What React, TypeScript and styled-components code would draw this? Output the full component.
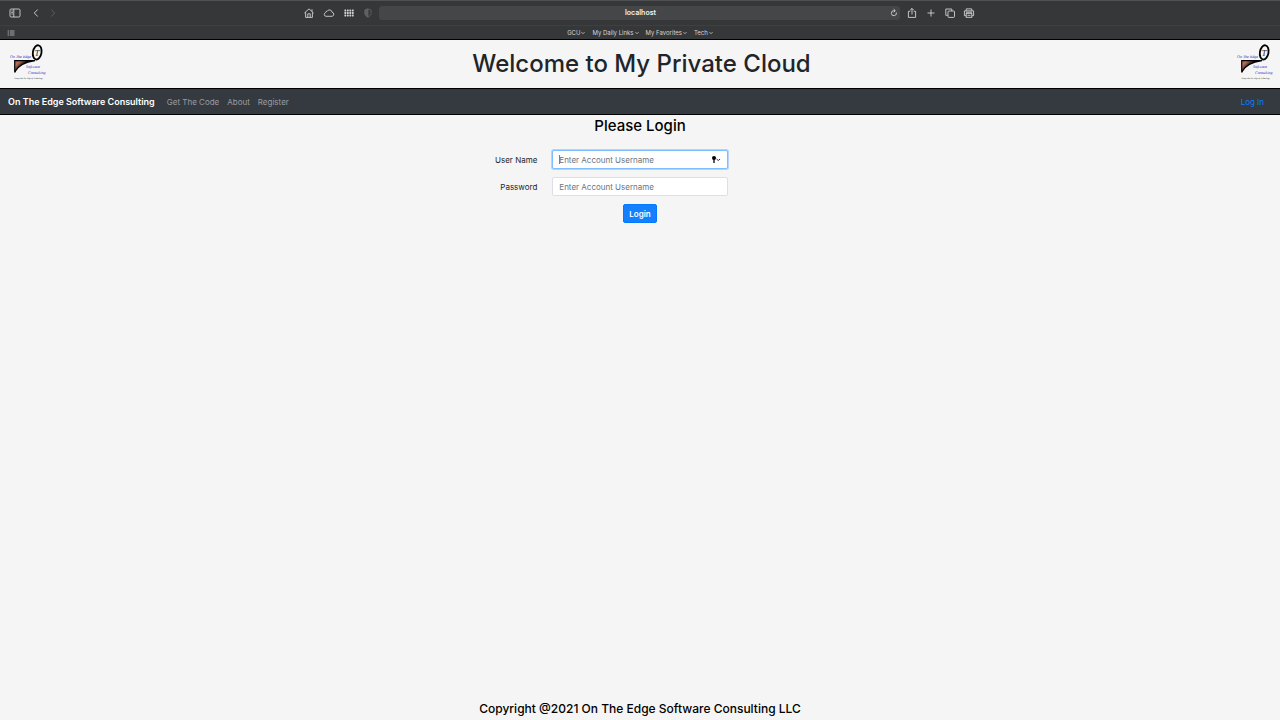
import React from "react";
import styled, { createGlobalStyle } from "styled-components";

const GlobalStyle = createGlobalStyle`
  * { box-sizing: border-box; }
  html, body, #root { height: 100%; }
  body {
    margin: 0;
    background: #f5f5f5;
    color: #212529;
    font-family: Inter, "Liberation Sans", sans-serif;
    font-size: 8px;
    line-height: 12px;
  }
`;

const Page = styled.div`
  display: flex;
  flex-direction: column;
  min-height: 100%;
`;

const Browser = styled.div`
  background: #363739;
  border-top: 1px solid #505153;
  border-bottom: 1px solid #000;
  color: #dcdcdc;
`;

const Toolbar = styled.div`
  display: grid;
  grid-template-columns: 1fr minmax(0, 672px) 1fr;
  align-items: center;
  height: 25px;
  padding-right: 2px;
  border-bottom: 1px solid #3e3f41;
`;

const ToolGroup = styled.div`
  display: flex;
  align-items: center;
  gap: 9px;
  padding-left: 9px;
`;

const ToolCenter = styled.div`
  display: flex;
  align-items: center;
  gap: 6px;
`;

const ToolSet = styled.div<{ $gap: number }>`
  display: flex;
  gap: ${(p) => p.$gap}px;
`;

const IconButton = styled.button<{ $dim?: boolean; $narrow?: boolean }>`
  display: flex;
  align-items: center;
  justify-content: center;
  width: ${(p) => (p.$narrow ? 10 : 12)}px;
  height: 12px;
  padding: 0;
  border: 0;
  background: none;
  color: ${(p) => (p.$dim ? "#606163" : "#d2d2d3")};

  svg {
    flex: none;
  }
`;

const Address = styled.div`
  display: flex;
  align-items: center;
  flex: 1;
  height: 14px;
  padding: 0 0 0 14px;
  border-radius: 3px;
  background: #454648;
`;

const AddressInput = styled.input`
  flex: 1;
  min-width: 0;
  padding: 0;
  border: 0;
  outline: 0;
  background: none;
  color: #f2f2f2;
  font: 600 7px/12px Inter, "Liberation Sans", sans-serif;
  text-align: center;
`;

const BookmarkBar = styled.div`
  display: grid;
  grid-template-columns: 1fr auto 1fr;
  align-items: center;
  height: 13px;
  padding: 0 5px;
`;

const Bookmarks = styled.div`
  display: flex;
  gap: 7px;
`;

const Bookmark = styled.button`
  display: flex;
  align-items: center;
  gap: 1px;
  padding: 0;
  border: 0;
  background: none;
  color: #d4d4d4;
  font: 400 6px/10px Inter, "Liberation Sans", sans-serif;
`;

const Header = styled.header`
  display: flex;
  align-items: center;
  justify-content: space-between;
  height: 48px;
  padding: 0 5px 0 8px;
`;

const Title = styled.h1`
  margin: 0;
  font-size: 24px;
  font-weight: 500;
  line-height: 32px;
`;

const Nav = styled.nav`
  display: flex;
  align-items: center;
  height: 27px;
  padding: 0 16px 0 8px;
  border: solid #000;
  border-width: 1px 0;
  background: #343a40;
`;

const Brand = styled.a`
  margin-right: 12px;
  color: #fff;
  font-size: 9px;
  font-weight: 600;
  line-height: 16px;
  text-decoration: none;
`;

const NavLinks = styled.div`
  display: flex;
  flex: 1;
  gap: 8px;
`;

const NavLink = styled.a<{ $primary?: boolean }>`
  color: ${(p) => (p.$primary ? "#0f7cff" : "#9a9da0")};
  text-decoration: none;
`;

const Main = styled.main`
  flex: 1;
  padding: 0 16px;
`;

const Heading = styled.h2`
  margin: 0 0 13px;
  color: #000;
  font-size: 15px;
  font-weight: 500;
  line-height: 22px;
  text-align: center;
`;

const Form = styled.form`
  display: flex;
  flex-direction: column;
  gap: 8px;
  max-width: 556px;
  margin: 0 auto;
`;

const Row = styled.div`
  display: grid;
  grid-template-columns: repeat(3, minmax(0, 1fr));
  column-gap: 15px;
  align-items: center;
`;

const Label = styled.label`
  text-align: right;
`;

const Field = styled.div`
  position: relative;
`;

const Input = styled.input<{ $active?: boolean }>`
  display: block;
  width: 100%;
  height: 19px;
  padding: 0 6px;
  border: 1px solid ${(p) => (p.$active ? "#80bdff" : "#dce0e4")};
  border-radius: 2px;
  outline: 0;
  background: #fff;
  box-shadow: ${(p) => (p.$active ? "0 0 0 1px #b1d5fb" : "none")};
  color: #495057;
  font: 400 8px/12px Inter, "Liberation Sans", sans-serif;

  &::placeholder {
    color: #6c757d;
    opacity: 1;
  }
`;

const Caret = styled.span`
  position: absolute;
  top: 5px;
  left: 7px;
  width: 1px;
  height: 9px;
  background: #777d83;
`;

const KeyButton = styled.button`
  position: absolute;
  top: 4px;
  right: 7px;
  display: flex;
  padding: 0;
  border: 0;
  background: none;
  color: #000;
`;

const Submit = styled.button`
  grid-column: 2;
  justify-self: center;
  height: 19px;
  padding: 0 5px;
  border: 1px solid #007bff;
  border-radius: 2px;
  background: #1480ff;
  color: #fff;
  font: 600 8px/12px Inter, "Liberation Sans", sans-serif;
`;

const Footer = styled.footer`
  padding: 0 16px 3px;
  color: #000;
  font-size: 12px;
  font-weight: 500;
  line-height: 16px;
  text-align: center;
`;

const LogoWords = styled.g`
  font-family: "Liberation Serif", serif;
  font-style: italic;
  text-rendering: geometricPrecision;
`;

const shapes = {
  sidebar: (
    <>
      <rect x="1" y="2" width="10" height="8" rx="1.2" />
      <path d="M4.8 2v8M2.4 4h1.4M2.4 5.5h1.4M2.4 7h1.4" />
    </>
  ),
  back: <path d="M7.7 2.5 4.3 6l3.4 3.5" />,
  forward: <path d="M4.3 2.5 7.7 6 4.3 9.5" />,
  home: (
    <>
      <path d="M1.4 6 6 1.900 10.600 6M2.600 5.200v5.200h6.800V5.200M9 2.300v2" />
      <path d="M4.800 10.200V6.800h2.400v3.400" />
    </>
  ),
  cloud: (
    <path d="M3 9.300a1.900 1.900 0 0 1-.4-3.700 1.400 1.400 0 0 1 1.500-1.300 2.600 2.600 0 0 1 4.900.9 2.100 2.100 0 0 1 .2 4.100z" />
  ),
  grid: (
    <g fill="currentColor" stroke="none">
      {[2.6, 5.1, 7.6].map((y) =>
        [1.4, 3.9, 6.4, 8.9].map((x) => (
          <rect key={`${x}-${y}`} x={x} y={y} width="1.8" height="1.8" rx="0.4" />
        ))
      )}
    </g>
  ),
  shield: (
    <>
      <path d="M6 1.900 9 3v3.200c0 1.800-1.200 3-3 3.900-1.800-.9-3-2.100-3-3.900V3z" />
      <path d="M6 1.900v8.200C4.200 9.200 3 8 3 6.200V3z" fill="currentColor" />
    </>
  ),
  reload: (
    <>
      <path d="M8.300 5.500A2.500 2.500 0 1 1 6 3.700h1" />
      <path d="M5.700 2.200 7.300 3.700 5.700 5.200" />
    </>
  ),
  share: (
    <>
      <path d="M4.300 4.300H2.400v6.100h7.200V4.300H7.700" />
      <path d="M6 7.500V1.500M4.200 3.200 6 1.400l1.800 1.800" />
    </>
  ),
  plus: <path d="M6 2.500v7M2.500 6h7" />,
  tabs: (
    <>
      <path d="M3.800 8.300H1.800V2h6v2" />
      <rect x="4" y="4" width="6.500" height="6.400" rx="0.800" />
    </>
  ),
  printer: (
    <>
      <path d="M3.200 3.800V1.900h5.600v1.900M3 8.700H1.400V3.900h9.200v4.800H9M3 5.200h6" />
      <rect x="3.200" y="6.300" width="5.600" height="4" />
      <path d="M4.500 8.300h3" />
    </>
  ),
  list: (
    <g opacity="0.8">
      <path d="M4.800 4H9.500M4.800 6H9.500M4.800 8H9.500" />
      <path d="M2.600 4H4M2.600 6H4M2.600 8H4" />
    </g>
  ),
};

function Icon({ name }: { name: keyof typeof shapes }) {
  return (
    <svg width="12" height="12" viewBox="0 0 12 12" fill="none" stroke="currentColor" strokeWidth="0.9" aria-hidden="true">
      {shapes[name]}
    </svg>
  );
}

function Chevron() {
  return (
    <svg width="4" height="4" viewBox="0 0 4 4" fill="none" stroke="currentColor" strokeWidth="0.8" aria-hidden="true">
      <path d="M0.5 1.2 2 2.7 3.5 1.2" />
    </svg>
  );
}

function Logo({ id }: { id: string }) {
  return (
    <svg width="40" height="40" viewBox="0 0 40 40" role="img" aria-label="On The Edge Software Consulting">
      <defs>
        <linearGradient id={id} x1="0" y1="0" x2="1" y2="0.6">
          <stop offset="0" stopColor="#d8482c" />
          <stop offset="0.2" stopColor="#b0705c" />
          <stop offset="0.45" stopColor="#1c1512" />
        </linearGradient>
      </defs>
      <path d="M7 16.500h20C17 18 10 21.500 7 29z" fill={`url(#${id})`} />
      <path d="M6.700 28.500V16.600H27C17 18 10 21.500 6.700 28" fill="none" stroke="#000" strokeWidth="1.200" />
      <ellipse cx="29.200" cy="8.400" rx="4.300" ry="7.200" fill="#f5f5f5" stroke="#000" strokeWidth="1.800" transform="rotate(10 29.200 8.400)" />
      <LogoWords>
        <text x="26.500" y="11.500" fontSize="9" fill="#333">T</text>
        <g fill="#2626c4" fontSize="4">
          <text x="2" y="13.500">On The Edge</text>
          <text x="18" y="24">Software</text>
          <text x="20" y="30">Consulting</text>
        </g>
        <text x="6" y="34.500" fontSize="2" fill="#111">Always On The Edge of Technology</text>
      </LogoWords>
    </svg>
  );
}

export default function App() {
  return (
    <Page>
      <GlobalStyle />
      <Browser>
        <Toolbar>
          <ToolGroup>
            <IconButton aria-label="Sidebar"><Icon name="sidebar" /></IconButton>
            <ToolSet $gap={5}>
              <IconButton aria-label="Back"><Icon name="back" /></IconButton>
              <IconButton aria-label="Forward" $dim><Icon name="forward" /></IconButton>
            </ToolSet>
          </ToolGroup>
          <ToolCenter>
            <ToolSet $gap={8}>
              <IconButton aria-label="Home"><Icon name="home" /></IconButton>
              <IconButton aria-label="Cloud tabs"><Icon name="cloud" /></IconButton>
              <IconButton aria-label="Top sites"><Icon name="grid" /></IconButton>
              <IconButton aria-label="Privacy report" $dim $narrow><Icon name="shield" /></IconButton>
            </ToolSet>
            <Address>
              <AddressInput aria-label="Address" defaultValue="localhost" />
              <IconButton aria-label="Reload"><Icon name="reload" /></IconButton>
            </Address>
            <ToolSet $gap={7}>
              <IconButton aria-label="Share"><Icon name="share" /></IconButton>
              <IconButton aria-label="New tab"><Icon name="plus" /></IconButton>
              <IconButton aria-label="Tab overview"><Icon name="tabs" /></IconButton>
              <IconButton aria-label="Print"><Icon name="printer" /></IconButton>
            </ToolSet>
          </ToolCenter>
        </Toolbar>
        <BookmarkBar>
          <IconButton aria-label="Favorites"><Icon name="list" /></IconButton>
          <Bookmarks>
            {["GCU", "My Daily Links", "My Favorites", "Tech"].map((name) => (
              <Bookmark key={name}>{name}<Chevron /></Bookmark>
            ))}
          </Bookmarks>
        </BookmarkBar>
      </Browser>
      <Header>
        <Logo id="edge-left" />
        <Title>Welcome to My Private Cloud</Title>
        <Logo id="edge-right" />
      </Header>
      <Nav>
        <Brand href="#">On The Edge Software Consulting</Brand>
        <NavLinks>
          <NavLink href="#code">Get The Code</NavLink>
          <NavLink href="#about">About</NavLink>
          <NavLink href="#register">Register</NavLink>
        </NavLinks>
        <NavLink href="#login" $primary>Log In</NavLink>
      </Nav>
      <Main>
        <Heading>Please Login</Heading>
        <Form onSubmit={(e) => e.preventDefault()}>
          <Row>
            <Label htmlFor="username">User Name</Label>
            <Field>
              <Input id="username" type="text" placeholder="Enter Account Username" $active />
              <Caret />
              <KeyButton type="button" aria-label="Saved passwords">
                <svg width="10" height="11" viewBox="0 0 10 11" aria-hidden="true">
                  <circle cx="3" cy="4" r="2" fill="currentColor" />
                  <path d="M3 5v4" stroke="currentColor" strokeWidth="1.300" />
                  <path d="M5.500 5 7.300 6.500 9.100 5" fill="none" stroke="currentColor" strokeWidth="0.800" />
                </svg>
              </KeyButton>
            </Field>
          </Row>
          <Row>
            <Label htmlFor="password">Password</Label>
            <Input id="password" type="password" placeholder="Enter Account Username" />
          </Row>
          <Row>
            <Submit type="submit">Login</Submit>
          </Row>
        </Form>
      </Main>
      <Footer>Copyright @2021 On The Edge Software Consulting LLC</Footer>
    </Page>
  );
}
